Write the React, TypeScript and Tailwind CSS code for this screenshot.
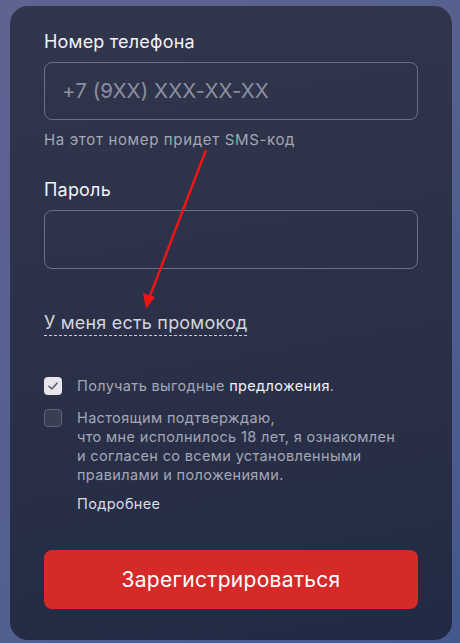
import React from "react";

export default function App() {
  return (
    <div className="relative w-[460px] h-[643px] overflow-hidden bg-[linear-gradient(135deg,#5f6392_0%,#54608f_50%,#44588f_100%)] font-['Inter',sans-serif]">
      <div className="absolute left-[10px] top-[6px] w-[442px] h-[634px] rounded-[18px] bg-[linear-gradient(170deg,#31364c_0%,#2a3048_55%,#222a43_100%)] px-[34px] pt-[25px]">
        <div className="text-[18px] leading-[22px] tracking-[0.2px] text-[#f2f3f7]">Номер телефона</div>
        <div className="mt-[9px] h-[58px] rounded-[8px] border border-[#6a6f86] flex items-center pl-[17px] text-[20.5px] tracking-[0.1px] text-[#8b8fa0]">
          +7 (9XX) XXX-XX-XX
        </div>
        <div className="mt-[11px] text-[15px] leading-[18px] tracking-[0.65px] text-[#a4a7b5]">На этот номер придет SMS-код</div>
        <div className="mt-[30px] text-[18px] leading-[22px] tracking-[0.2px] text-[#f2f3f7]">Пароль</div>
        <div className="mt-[9px] h-[59px] rounded-[8px] border border-[#6a6f86]" />
        <div className="mt-[43px] leading-[22px]">
          <span className="text-[18px] leading-[22px] tracking-[0.2px] text-[#d3d5de] border-b border-dashed border-[#c9cbd5] pb-[2px]">
            У меня есть промокод
          </span>
        </div>
        <div className="mt-[43px] flex items-start gap-[15px]">
          <div className="w-[18px] h-[18px] rounded-[4px] bg-[#e6e6ec] flex items-center justify-center shrink-0">
            <svg width="10" height="8" viewBox="0 0 10 8" fill="none">
              <path d="M1 4.2 L3.8 7 L9 1.2" stroke="#5b5e6c" strokeWidth="1.6" strokeLinecap="round" strokeLinejoin="round" />
            </svg>
          </div>
          <div className="text-[14.5px] leading-[18px] tracking-[0.35px] text-[#a4a7b5]">
            Получать выгодные <span className="text-[#f2f3f7]">предложения</span>.
          </div>
        </div>
        <div className="mt-[14px] flex items-start gap-[15px]">
          <div className="w-[18px] h-[18px] rounded-[4px] border border-[#5f6479] bg-[#393e52] shrink-0" />
          <div className="-mt-[1px] text-[14.5px] leading-[19px] tracking-[0.35px] text-[#a4a7b5]">
            Настоящим подтверждаю,
            <br />
            что мне исполнилось 18 лет, я ознакомлен
            <br />
            и согласен со всеми установленными
            <br />
            правилами и положениями.
            <div className="mt-[10px] text-[#dcdde4]">Подробнее</div>
          </div>
        </div>
        <button className="mt-[37px] w-full h-[59px] rounded-[8px] bg-[#d52a28] text-white text-[21px] tracking-[0.3px] flex items-center justify-center">
          Зарегистрироваться
        </button>
      </div>
      <svg className="absolute left-0 top-0 pointer-events-none" width="460" height="643" viewBox="0 0 460 643">
        <line x1="206" y1="150" x2="150" y2="296" stroke="#f01414" strokeWidth="2.5" />
        <polygon points="146,309 143,293 155,297" fill="#f01414" />
      </svg>
    </div>
  );
}
